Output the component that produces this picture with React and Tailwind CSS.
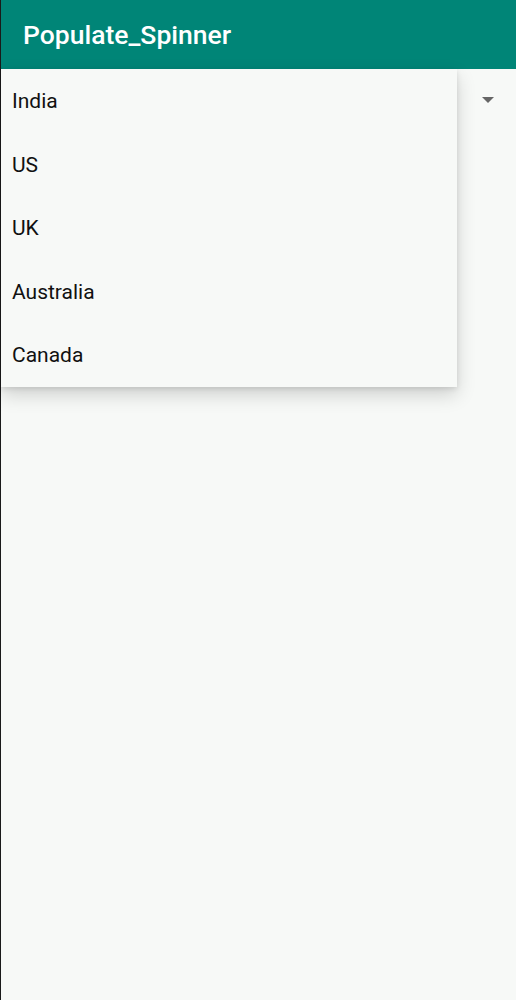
import React from 'react';

const countries = ['India', 'US', 'UK', 'Australia', 'Canada'];

export default function App() {
  return (
    <div
      className="relative min-h-[1000px] bg-[#f7f9f7] border-l border-[#1a1a1a]"
      style={{ fontFamily: 'Roboto, "Noto Sans", sans-serif' }}
    >
      {/* App bar */}
      <div className="h-[69px] bg-[#008577] flex items-center pl-[22px] pt-[1px]">
        <h1 className="text-white text-[26.5px] font-medium">Populate_Spinner</h1>
      </div>

      {/* Spinner row */}
      <div className="relative h-[64px] flex items-center justify-end pr-[22px]">
        <svg width="12" height="7" viewBox="0 0 12 7" className="mt-[-2px]">
          <path d="M0 0h12L6 6z" fill="#666" />
        </svg>

        {/* Dropdown popup */}
        <div className="absolute left-0 top-0 w-[456px] bg-[#f7f9f7] shadow-[0_8px_18px_rgba(0,0,0,0.16),0_2px_5px_rgba(0,0,0,0.1)]">
          {countries.map((c) => (
            <div key={c} className="h-[63.5px] flex items-center pl-[11px] pt-[2px] text-[21px] text-[#111]">
              {c}
            </div>
          ))}
        </div>
      </div>
    </div>
  );
}
